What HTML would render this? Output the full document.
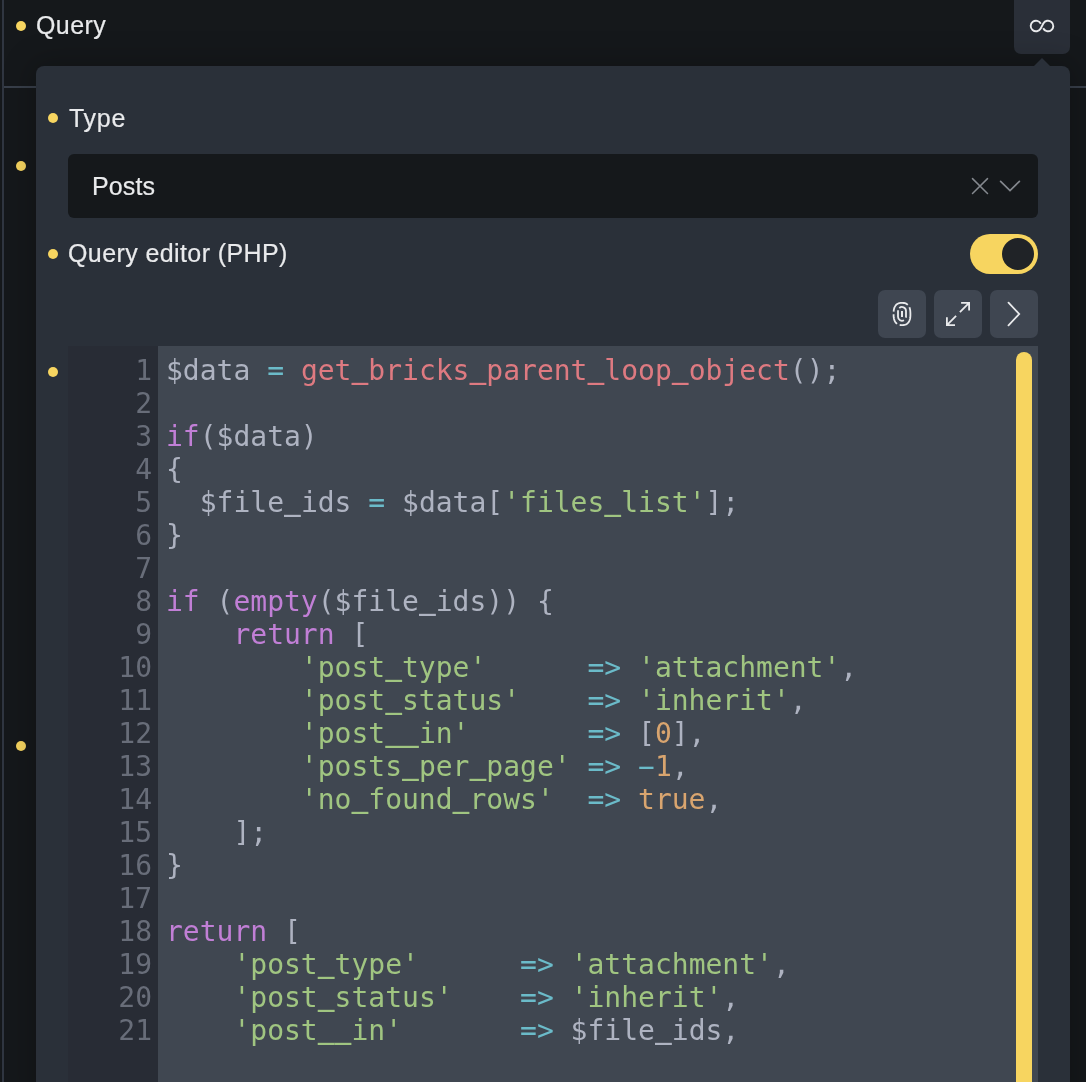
<!DOCTYPE html>
<html lang="en">
<head>
<meta charset="utf-8">
<title>Query</title>
<style>
*{box-sizing:border-box;margin:0;padding:0}
html,body{width:1086px;height:1082px;overflow:hidden;background:#15181b}
body{position:relative;font-family:"Liberation Sans",sans-serif;color:#e9eaec}
.abs{position:absolute}
.vline{left:2px;top:0;width:2px;height:1082px;background:#303641}
.hline{left:4px;top:86px;width:1082px;height:2px;background:#383f4a}
.dot{position:absolute;width:10px;height:10px;border-radius:50%;background:#f7d560}
.label{position:absolute;font-size:25px;line-height:30px;white-space:nowrap;color:#e9eaec;letter-spacing:.4px;will-change:transform;-webkit-text-stroke:.2px #e9eaec}
.loopbtn{left:1014px;top:-6px;width:56px;height:60px;border-radius:7px;background:#2a2f38}
.popup{left:36px;top:66px;width:1034px;height:1040px;border-radius:8px;background:#2a3039;box-shadow:0 0 30px 5px rgba(0,0,0,.22)}
.arrow{left:1034px;top:58px;width:0;height:0;border-left:8px solid transparent;border-right:8px solid transparent;border-bottom:8px solid #2a3039}
.select{left:68px;top:154px;width:970px;height:64px;border-radius:6px;background:#15181b}
.toggle{left:970px;top:234px;width:68px;height:40px;border-radius:20px;background:#f7d560}
.knob{left:1002px;top:238px;width:32px;height:32px;border-radius:50%;background:#202327}
.btn{position:absolute;top:290px;width:48px;height:48px;border-radius:7px;background:#3f4651}
.editor{left:68px;top:346px;width:970px;height:760px;background:#404751;overflow:hidden}
.gutter{left:0;top:0;width:90px;height:760px;background:#282c35}
.scroll{left:948px;top:6px;width:16px;height:800px;border-radius:8px;background:#f7d560}
pre{position:absolute;font-family:"DejaVu Sans Mono","Liberation Mono",monospace;font-size:28px;line-height:33px;white-space:pre;will-change:transform}
pre.nums{left:0;top:8px;width:84px;text-align:right;color:#686d79}
pre.code{left:98px;top:8px;color:#aeb3c1}
pre i{font-style:normal;display:inline-block;transform:scaleY(2);transform-origin:50% 34.4px}
.m{display:inline-block;transform:scaleX(2)}
.k{color:#c17fd6}.f{color:#de7a81}.s{color:#a0c581}.o{color:#6bbbc9}.n{color:#d9a56f}
</style>
</head>
<body>
<div class="abs vline"></div>
<div class="abs hline"></div>
<div class="dot" style="left:16px;top:21px"></div>
<div class="label" style="left:36px;top:10px">Query</div>
<div class="dot" style="left:16px;top:161px"></div>
<div class="dot" style="left:16px;top:741px"></div>
<div class="abs loopbtn"></div>
<svg class="abs" style="left:1014px;top:0" width="56" height="52" viewBox="-28 -26 56 52" fill="none" stroke="#e9eaec" stroke-width="1.9"><path d="M-1.2 -2.24A5.3 5.3 0 1 0 -1.32 2.49L1.32 -2.49A5.3 5.3 0 1 1 1.2 2.24"/></svg>
<div class="abs popup"></div>
<div class="abs arrow"></div>

<div class="dot" style="left:48px;top:113px"></div>
<div class="label" style="left:68.5px;top:102.7px;letter-spacing:.7px">Type</div>
<div class="abs select"></div>
<div class="label" style="left:91.5px;top:171px;letter-spacing:.1px">Posts</div>
<svg class="abs" style="left:960px;top:166px" width="70" height="40" viewBox="960 166 70 40" fill="none" stroke="#84888e" stroke-width="1.5" stroke-linecap="round"><path d="M972.5 178.6L987.5 193.5M987.5 178.6L972.5 193.5"/><path d="M1000.6 181.3L1010 190.6L1019.4 181.3" stroke-width="1.7"/></svg>

<div class="dot" style="left:48px;top:249px"></div>
<div class="label" style="left:68px;top:238px">Query editor (PHP)</div>
<div class="abs toggle"></div>
<div class="abs knob"></div>

<div class="btn" style="left:878px"></div>
<div class="btn" style="left:934px"></div>
<div class="btn" style="left:990px"></div>
<svg class="abs" style="left:878px;top:290px" width="48" height="48" viewBox="-24 -24 48 48" fill="none" stroke="#e9eaec" stroke-width="1.8" stroke-linejoin="round"><path d="M-8.4 -2.4L-8.2 -4.0L-7.9 -5.4L-7.5 -6.6L-6.9 -7.6L-6.3 -8.6L-5.6 -9.4L-4.7 -10.0L-3.8 -10.5L-2.7 -10.9L-1.4 -11.1L0.4 -11.1L1.9 -11.0L3.0 -10.8L4.1 -10.4L5.0 -9.8L5.8 -9.1M7.4 -6.8L7.8 -5.6L8.1 -4.3L8.3 -2.8L8.4 -1.0L8.4 1.5L8.3 3.2L8.1 4.7L7.7 5.9L7.2 7.1L6.7 8.1L6.0 8.9L5.2 9.7L4.3 10.3L3.3 10.7L2.2 11.0L0.9 11.1L-1.0 11.1L-2.3 11.0M-5.0 9.9L-5.6 9.3L-6.2 8.7L-6.7 8.0L-7.2 7.2L-7.5 6.4L-7.9 5.4L-8.1 4.4L-8.3 3.2L-8.4 1.9L-8.4 0.3"/><path d="M-2.7 -5.95A4 4 0 0 1 4 -3.05L4 2.85A4 4 0 0 1 3.8 3.6M-3.95 -3.7L-4 -3.05L-4 2.85A4 4 0 0 0 2 6.3"/><path d="M0 -3L0 3" stroke-width="2"/></svg>
<svg class="abs" style="left:934px;top:290px" width="48" height="48" viewBox="0 0 48 48" fill="none" stroke="#e9eaec" stroke-width="1.8"><path d="M27.1 12.9H35.1V20.5M35.1 12.9L25.9 22.1M12.9 27.3V35.1H21M12.9 35.1L22.1 25.9"/></svg>
<svg class="abs" style="left:990px;top:290px" width="48" height="48" viewBox="0 0 48 48" fill="none" stroke="#e9eaec" stroke-width="1.8" stroke-linecap="round"><path d="M18.5 12.6L29.2 24L18.5 35.4"/></svg>

<div class="dot" style="left:48px;top:367px"></div>
<div class="abs editor">
<div class="abs gutter"></div>
<pre class="nums">1
2
3
4
5
6
7
8
9
10
11
12
13
14
15
16
17
18
19
20
21</pre>
<pre class="code">$data <span class="o">=</span> <span class="f">get<i>_</i>bricks<i>_</i>parent<i>_</i>loop<i>_</i>object</span>();

<span class="k">if</span>($data)
{
  $file<i>_</i>ids <span class="o">=</span> $data[<span class="s">'files<i>_</i>list'</span>];
}

<span class="k">if</span> (<span class="k">empty</span>($file<i>_</i>ids)) {
    <span class="k">return</span> [
        <span class="s">'post<i>_</i>type'</span>      <span class="o">=&gt;</span> <span class="s">'attachment'</span>,
        <span class="s">'post<i>_</i>status'</span>    <span class="o">=&gt;</span> <span class="s">'inherit'</span>,
        <span class="s">'post<i>_</i><i>_</i>in'</span>       <span class="o">=&gt;</span> [<span class="n">0</span>],
        <span class="s">'posts<i>_</i>per<i>_</i>page'</span> <span class="o">=&gt;</span> <span class="o m">-</span><span class="n">1</span>,
        <span class="s">'no<i>_</i>found<i>_</i>rows'</span>  <span class="o">=&gt;</span> <span class="n">true</span>,
    ];
}

<span class="k">return</span> [
    <span class="s">'post<i>_</i>type'</span>      <span class="o">=&gt;</span> <span class="s">'attachment'</span>,
    <span class="s">'post<i>_</i>status'</span>    <span class="o">=&gt;</span> <span class="s">'inherit'</span>,
    <span class="s">'post<i>_</i><i>_</i>in'</span>       <span class="o">=&gt;</span> $file<i>_</i>ids,</pre>
<div class="abs scroll"></div>
</div>
</body>
</html>
